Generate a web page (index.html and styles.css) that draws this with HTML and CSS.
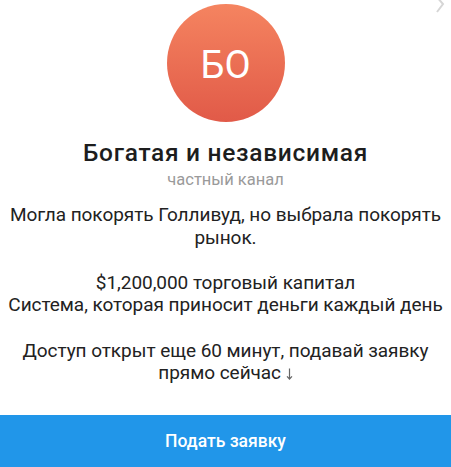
FILE: index.html
```html
<!DOCTYPE html>
<html lang="ru">
<head>
  <meta charset="UTF-8" />
  <title>Богатая и независимая</title>
  <link rel="stylesheet" href="styles.css">
</head>
<body>

  <svg class="corner" width="14" height="16" viewBox="0 0 14 16">
    <polyline points="3,-4 10,4 4,12" fill="none" stroke="#d6d6d6" stroke-width="2"/>
  </svg>

  <div class="channel">
    <div class="avatar">БО</div>
    <h2 class="title">Богатая и независимая</h2>
    <div class="subtitle">частный канал</div>

    <div class="about">
      <p>Могла покорять Голливуд, но выбрала покорять рынок.</p>
      <p>$1,200,000 торговый капитал<br>Система, которая приносит деньги каждый день</p>
      <p>Доступ открыт еще 60 минут, подавай заявку прямо сейчас
        <svg class="arrow" width="7" height="12" viewBox="0 0 7 12">
          <path d="M3.5 0.5 V11 M1 8.3 L3.5 11 L6 8.3" fill="none" stroke="#666" stroke-width="1.2"/>
        </svg></p>
    </div>
  </div>

  <button class="join">Подать заявку</button>

</body>
</html>
```

FILE: styles.css
```css
* { box-sizing: border-box; }
body {
  font-family: Roboto, 'Noto Sans', sans-serif;
  margin: 0;
  background: #fff;
  color: #222;
  height: 467px;
  display: flex;
  flex-direction: column;
  position: relative;
  overflow: hidden;
}

.corner {
  position: absolute;
  top: 0;
  right: 4px;
}

.channel {
  flex: 1;
  display: flex;
  flex-direction: column;
  align-items: center;
  padding-top: 4px;
}

.avatar {
  width: 118px;
  height: 118px;
  border-radius: 50%;
  background: linear-gradient(#f58460, #e15a48);
  color: #fff;
  font-size: 38px;
  display: flex;
  align-items: center;
  justify-content: center;
  padding-top: 4px;
}

.title {
  font-size: 24.5px;
  font-weight: 500;
  letter-spacing: 0.7px;
  color: #1d1d1d;
  margin: 16px 0 0;
  line-height: 29px;
}

.subtitle {
  font-size: 16.5px;
  line-height: 20px;
  margin-top: 3px;
  color: #9a9a9a;
}

.about {
  margin-top: 14px;
  text-align: center;
  font-size: 19px;
  letter-spacing: -0.05px;
  line-height: 22.6px;
}

.about p { margin: 0 0 22.6px; }

.arrow {
  vertical-align: -1px;
}

.join {
  height: 52px;
  border: none;
  background: #2196e9;
  color: #fff;
  font-family: Roboto, sans-serif;
  font-size: 17.5px;
  font-weight: 500;
  width: 100%;
  flex-shrink: 0;
}
```
